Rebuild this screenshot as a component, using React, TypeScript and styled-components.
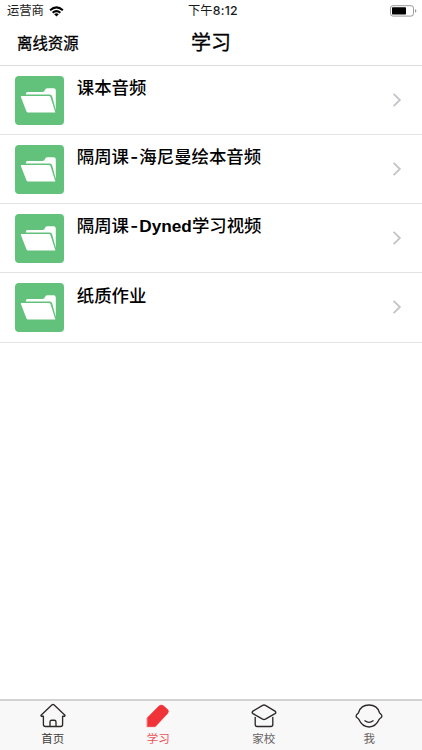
import React from "react";
import styled, { createGlobalStyle } from "styled-components";

const GlobalStyle = createGlobalStyle`
  * { box-sizing: border-box; }
  body { margin: 0; background: #fff; }
`;

const Screen = styled.div`
  display: flex;
  flex-direction: column;
  width: 422px;
  height: 750px;
  overflow: hidden;
  background: #fff;
  color: #000;
  font-family: "Liberation Sans", "Noto Sans CJK SC", sans-serif;
`;

const StatusBar = styled.div`
  display: grid;
  grid-template-columns: 1fr auto 1fr;
  align-items: center;
  height: 22px;
  padding: 0 5px 0 7px;
  font-size: 12.3px;
  line-height: 22px;
  color: #1a1a1a;
`;

const Carrier = styled.div`
  display: flex;
  align-items: center;
  gap: 5px;
`;

const Clock = styled.div`
  display: flex;
  padding-left: 2px;
  white-space: nowrap;
`;

const ClockDigits = styled.span`
  font-family: Inter, sans-serif;
  font-weight: 500;
  letter-spacing: 0.3px;
`;

const Battery = styled.svg`
  justify-self: end;
`;

const NavBar = styled.header`
  display: grid;
  grid-template-columns: 1fr auto 1fr;
  align-items: center;
  height: 44px;
  padding: 0 17px;
  border-bottom: 1px solid #dcdcde;
  -webkit-text-stroke: 0.3px #000;
`;

const NavAction = styled.div`
  font-size: 15.4px;
  line-height: 20px;
`;

const NavTitle = styled.h1`
  margin: 0;
  padding-bottom: 2px;
  font-size: 20px;
  font-weight: 400;
  line-height: 26px;
`;

const List = styled.main`
  flex: 1;
`;

const Row = styled.div`
  display: flex;
  height: 69.15px;
  padding: 10px 20px 0 15px;
  border-bottom: 1px solid #e3e3e5;
`;

const FolderTile = styled.div`
  flex: none;
  width: 49.4px;
  height: 49px;
  border-radius: 4px;
  background: #62c17b;
`;

const RowTitle = styled.div`
  flex: 1;
  padding: 0.1px 0 0 12.4px;
  font-size: 17.4px;
  font-weight: 500;
  line-height: 24px;
  white-space: nowrap;
`;

const Hyphen = styled.span`
  padding: 0 1.2px;
  font-family: Inter, sans-serif;
  font-size: 17.2px;
  font-weight: 600;
`;

const Latin = styled.span`
  font-size: 17.2px;
  font-weight: 700;
`;

const Chevron = styled.svg`
  flex: none;
  margin-top: 17px;
`;

const TabBar = styled.nav`
  display: grid;
  grid-template-columns: repeat(4, 1fr);
  height: 51px;
  border-top: 2px solid #d2d2d4;
  background: #f8f8f8;
`;

const Tab = styled.div<{ $color: string }>`
  display: flex;
  flex-direction: column;
  align-items: center;
  gap: 1px;
  padding-top: 1px;
  font-size: 11.5px;
  line-height: 16px;
  color: ${(p) => p.$color};
`;

const TabIcon = styled.svg`
  width: 30px;
  height: 28px;
  fill: none;
  stroke: #2e2929;
  stroke-width: 1.35;
  stroke-linecap: round;
  stroke-linejoin: round;
`;

const FolderIcon = () => (
  <svg width="49" height="49" viewBox="0 0 49 49" fill="#fff">
    <path d="M10.9 17.6q0-1.6 1.6-1.6H27.5q2 0 2.4-1.8.4-2 2.4-2H38.6q2.2 0 2.2 2.2V34L37.2 20.5q-.5-1.9-2.5-1.9H10.9z" />
    <path d="M6.4 20.1H33.9q1.3 0 1.7 1.3L40.4 36.6H13.2q-1.5 0-1.9-1.5L5.9 21q-.3-.9.5-.9z" />
  </svg>
);

const rows = [
  "课本音频",
  "隔周课-海尼曼绘本音频",
  "隔周课-Dyned学习视频",
  "纸质作业",
];

const renderTitle = (title: string) =>
  title.split(/(-|[A-Za-z]+)/).map((part, i) => {
    if (part === "-") return <Hyphen key={i}>{part}</Hyphen>;
    return i % 2 ? <Latin key={i}>{part}</Latin> : part;
  });

const tabs = [
  {
    label: "首页",
    color: "#3f3b3b",
    icon: (
      <path d="M5.4 14.2H3.4q-.8-.6-.1-1.3L13.8 3q1.2-.9 2.4 0L26.7 12.9q.7.7-.1 1.3h-2v8.3q0 2-2 2H7.4q-2 0-2-2zM12 24.5v-4.6q0-1.7 1.7-1.7h2.6q1.7 0 1.7 1.7v4.6" />
    ),
  },
  {
    label: "学习",
    color: "#ee5358",
    icon: (
      <path
        d="M4.3 15.8 15.9 4q2.3-1.9 4.6-.2l4.2 3.7q1.7 1.7 0 3.9L12.2 24.7H4.3z"
        fill="#f03338"
        stroke="#f03338"
        strokeWidth="0.5"
      />
    ),
  },
  {
    label: "家校",
    color: "#676363",
    icon: (
      <>
        <path d="M13.6 3.3q1.4-.7 2.8 0l9.6 5.8q1.7 1.3 0 2.5l-9.6 5.6q-1.4.7-2.8 0L4 11.600q-1.700-1.200 0-2.500z" />
        <path d="M6.200 15.300v7.200q0 2 2 2h13.600q2 0 2-2v-7.200" />
      </>
    ),
  },
  {
    label: "我",
    color: "#676363",
    icon: (
      <>
        <path d="M4.6 10.5C6 5.8 10 3 15 3s9 2.8 10.4 7.5c.4 1.200 2.500 2 2.500 3.700s-1.800 1.600-2.700 3.100C23.200 21.800 19.500 25 15 25S6.800 21.800 4.800 17.300c-.9-1.500-2.700-1.400-2.700-3.100s2.100-2.500 2.500-3.700z" />
        <path d="M10.900 18.800Q15 22 19.100 18.800" />
      </>
    ),
  },
];

export default function App() {
  return (
    <Screen>
      <GlobalStyle />
      <StatusBar>
        <Carrier>
          运营商
          <svg width="15" height="11" viewBox="0 0 15 11" fill="none" stroke="#000" strokeWidth="2">
            <path d="M1.1 4.2Q7.5-1.4 13.9 4.2M3.6 6.8Q7.5 3.5 11.4 6.8" />
            <path d="M5.2 8.2q2.3-1.8 4.6 0L7.5 10.6z" fill="#000" stroke="none" />
          </svg>
        </Carrier>
        <Clock>
          下午<ClockDigits>8:12</ClockDigits>
        </Clock>
        <Battery width="28" height="12" viewBox="0 0 28 12">
          <rect x="1.5" y=".7" width="23" height="10.4" rx="2.5" fill="#fff" stroke="#999" />
          <rect x="3" y="2.3" width="14" height="7.2" rx=".7" fill="#000" />
          <path d="M26 4.3q1.4.3 1.4 1.6T26 7.5z" fill="#999" />
        </Battery>
      </StatusBar>
      <NavBar>
        <NavAction>离线资源</NavAction>
        <NavTitle>学习</NavTitle>
      </NavBar>
      <List>
        {rows.map((title) => (
          <Row key={title}>
            <FolderTile>
              <FolderIcon />
            </FolderTile>
            <RowTitle>{renderTitle(title)}</RowTitle>
            <Chevron width="10" height="14" viewBox="0 0 10 14" fill="none" stroke="#c4c4c8" strokeWidth="1.8">
              <path d="M1.6.8 7.9 7 1.6 13.2" />
            </Chevron>
          </Row>
        ))}
      </List>
      <TabBar>
        {tabs.map((tab) => (
          <Tab key={tab.label} $color={tab.color}>
            <TabIcon viewBox="0 0 30 28">{tab.icon}</TabIcon>
            {tab.label}
          </Tab>
        ))}
      </TabBar>
    </Screen>
  );
}
